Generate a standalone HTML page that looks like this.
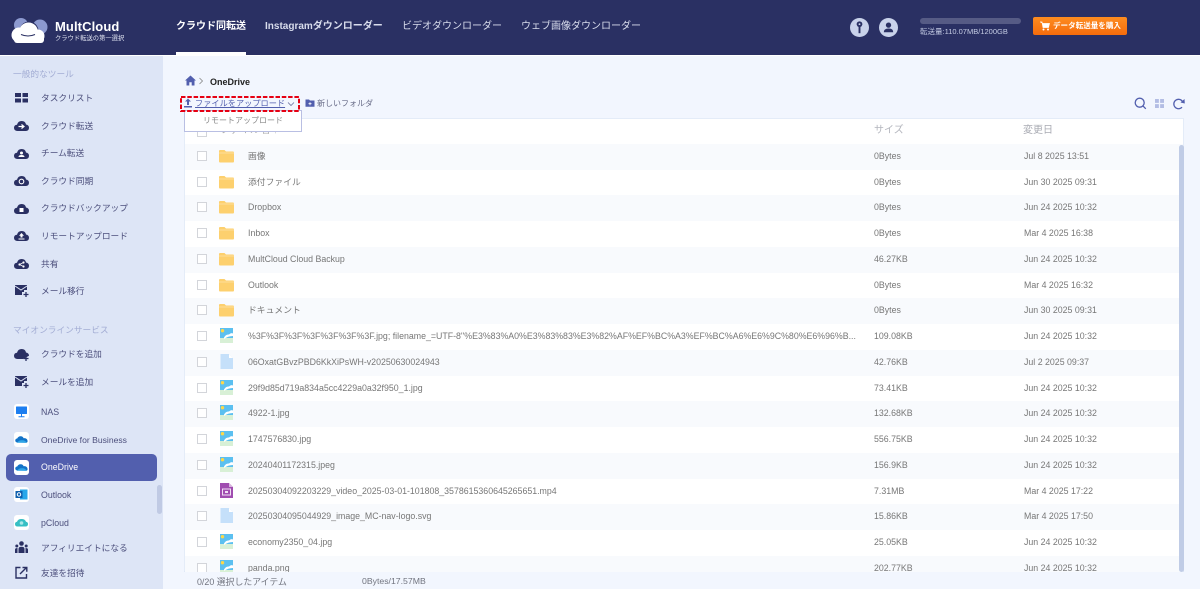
<!DOCTYPE html>
<html lang="ja"><head><meta charset="utf-8"><title>MultCloud</title>
<style>
*{box-sizing:border-box}
html,body{margin:0;padding:0}
body{width:1200px;height:589px;overflow:hidden;position:relative;background:#f2f6fe;font-family:"Liberation Sans","Noto Sans CJK JP",sans-serif;font-size:9px;color:#666}
.a{position:absolute;white-space:nowrap;line-height:14px}
#hd{position:absolute;left:0;top:0;width:1200px;height:55px;background:#2a3063}
#sd{position:absolute;left:0;top:56px;width:163px;height:533px;background:#dde5f6}
.nav{position:absolute;top:20px;color:#d8dcec;font-size:10px;line-height:14px;white-space:nowrap}
.si{position:absolute;left:41px;font-size:8.700px;color:#4c4f7c;line-height:14px;white-space:nowrap}
.sh{position:absolute;left:13px;font-size:8.700px;color:#a3add4;line-height:14px;white-space:nowrap}
.ic{position:absolute;left:14px;width:15px;height:15px}
.tile{position:absolute;left:14px;width:15px;height:15px;background:#fff;border-radius:3px}
.row{position:absolute;left:185px;width:998px;height:25.750px}
.row.s{background:#f8fafd}
.cb{position:absolute;left:12px;top:7px;width:10px;height:10px;border:1px solid #d3d5da;background:#fff}
.nm,.sz,.dt{position:absolute;top:5px;line-height:15px;font-size:8.800px;color:#777;white-space:nowrap}
.nm{left:63px}.sz{left:689px}.dt{left:839px}
.fi{position:absolute;left:34px;top:4px;width:15px;height:16px}
</style></head><body>
<svg width="0" height="0" style="position:absolute">
<symbol id="folder" viewBox="0 0 15 16"><path d="M0 3Q0 2 1 2H5.500L7 3.500H14Q15 3.500 15 4.500V13.500Q15 14.500 14 14.500H1Q0 14.500 0 13.500Z" fill="#fdd06e"/><path d="M0 5H15" stroke="#fff" stroke-width=".5" opacity=".6"/></symbol>
<symbol id="img" viewBox="0 0 15 16"><rect x="1" y="0" width="13" height="15" fill="#5cc0f0"/><rect x="1" y="10" width="13" height="5" fill="#d8f0d6"/><circle cx="3.500" cy="2.700" r="1.700" fill="#fbd84b"/><path d="M5 9.500Q7 6 10 6.500Q12 4.500 14 5.500V8Q9 8 5 11Z" fill="#fff"/></symbol>
<symbol id="doc" viewBox="0 0 15 16"><path d="M1.500 0H10L14 4V15H1.500Z" fill="#c5e0fa"/><path d="M10 0V4H14Z" fill="#fff"/></symbol>
<symbol id="vid" viewBox="0 0 15 16"><path d="M1 0H10L14 4V15H1Z" fill="#a04db0"/><path d="M10 0V4H14Z" fill="#d9b4e0"/><rect x="3.500" y="6" width="8" height="6" fill="none" stroke="#f0dff3" stroke-width="1"/><rect x="6" y="8" width="3" height="2" fill="#f0dff3"/></symbol>
<symbol id="cloud" viewBox="0 0 15 15"><path d="M3.500 13Q0 13 0 9.800Q0 7 3 6.700Q4 3 7.700 3Q11.300 3 12 6.500Q15 7 15 9.800Q15 13 11.800 13Z" fill="#2a3063"/></symbol>
<symbol id="od" viewBox="0 0 15 15"><path d="M3 10.500Q1 10 1.300 8Q1.700 6.500 3.200 6.500Q4.500 3.800 7.300 4.300Q9 4.700 9.700 6.200Q12.800 6 13.500 8.500Q14 10.500 12 10.800Z" fill="#1273c8"/><path d="M3 10.800Q5 8 8 8.300Q11 8 12.800 10.800Z" fill="#30a7e8"/></symbol>
</svg>

<div id="hd">
<svg class="a" style="left:10px;top:16px" width="42" height="29" viewBox="0 0 42 29"><circle cx="11" cy="9" r="7" fill="#8d9ad0"/><circle cx="30" cy="11" r="7.500" fill="#8d9ad0"/><circle cx="19" cy="15" r="9.500" fill="#2a3063"/><circle cx="18.500" cy="16" r="9.500" fill="#fff"/><circle cx="9" cy="19" r="7.500" fill="#fff"/><circle cx="28" cy="20" r="6.500" fill="#fff"/><rect x="4" y="20" width="30" height="7" rx="3" fill="#fff"/><path d="M11 18.500Q18 21.500 25 18.500" stroke="#2a3063" stroke-width="1" fill="none"/></svg>
<div class="a" style="left:55px;top:18.500px;font-size:13px;font-weight:bold;color:#fff;line-height:16px;letter-spacing:.1px">MultCloud</div>
<div class="a" style="left:55px;top:32px;font-size:6.300px;color:#dfe2f0;line-height:13px">クラウド転送の第一選択</div>
<div class="nav" style="left:176px;color:#fff;font-weight:bold">クラウド同転送</div>
<div style="position:absolute;left:176px;top:52px;width:70px;height:3px;background:#fff"></div>
<div class="nav" style="left:265px;font-weight:bold">Instagramダウンローダー</div>
<div class="nav" style="left:402px">ビデオダウンローダー</div>
<div class="nav" style="left:521px">ウェブ画像ダウンローダー</div>
<svg class="a" style="left:850px;top:18px" width="19" height="19" viewBox="0 0 20 20"><circle cx="10" cy="10" r="10" fill="#c9d2ea"/><circle cx="10" cy="6.500" r="3" fill="#2a3063"/><circle cx="10" cy="6.500" r="1" fill="#c9d2ea"/><rect x="9" y="9" width="2" height="7" fill="#2a3063"/></svg>
<svg class="a" style="left:879px;top:18px" width="19" height="19" viewBox="0 0 20 20"><circle cx="10" cy="10" r="10" fill="#c9d2ea"/><circle cx="10" cy="7.500" r="2.800" fill="#2a3063"/><path d="M5 15Q5 11 10 11Q15 11 15 15Z" fill="#2a3063"/></svg>
<div style="position:absolute;left:920px;top:17.500px;width:101px;height:6.500px;border-radius:4px;background:#565b85"></div>
<div class="a" style="left:920px;top:24.500px;font-size:7.500px;color:#c5cce4">転送量:110.07MB/1200GB</div>
<div style="position:absolute;left:1033px;top:17px;width:94px;height:18px;border-radius:2px;background:linear-gradient(#fd8c20,#f66c0c)"></div>
<svg class="a" style="left:1040px;top:21px" width="10" height="10" viewBox="0 0 10 10"><path d="M0 1H2L3 6.500H8.500L9.500 2.500H2.500" fill="#fff" stroke="#fff" stroke-width=".7"/><circle cx="3.500" cy="8.500" r="1" fill="#fff"/><circle cx="8" cy="8.500" r="1" fill="#fff"/></svg>
<div class="a" style="left:1053px;top:19px;font-size:7.550px;font-weight:bold;color:#fff">データ転送量を購入</div>
</div>
<div style="position:absolute;left:0;top:55px;width:1200px;height:1px;background:#fff"></div>

<div id="sd"></div>
<div class="sh" style="top:67px">一般的なツール</div>
<svg class="ic" style="top:90px" viewBox="0 0 15 15"><path d="M1 3H7V7H1ZM8.500 3H14V7H8.500ZM1 8.500H7V12.500H1ZM8.500 8.500H14V12.500H8.500Z" fill="#2a3063"/></svg>
<div class="si" style="top:91px">タスクリスト</div>
<svg class="ic" style="top:118px" viewBox="0 0 15 15"><use href="#cloud"/><path d="M4.500 8.500H9M7.500 6.500L10 8.500L7.500 10.500" fill="none" stroke="#fff" stroke-width="1.200"/></svg><div class="si" style="top:119px">クラウド転送</div>
<svg class="ic" style="top:146px" viewBox="0 0 15 15"><use href="#cloud"/><circle cx="7.500" cy="7" r="1.500" fill="#fff"/><path d="M4.500 11Q4.500 9 7.500 9Q10.500 9 10.500 11Z" fill="#fff"/></svg><div class="si" style="top:146px">チーム転送</div>
<svg class="ic" style="top:173px" viewBox="0 0 15 15"><use href="#cloud"/><circle cx="7.500" cy="8.500" r="2.300" fill="none" stroke="#fff" stroke-width="1.100"/></svg><div class="si" style="top:174px">クラウド同期</div>
<svg class="ic" style="top:201px" viewBox="0 0 15 15"><use href="#cloud"/><path d="M5.500 7H9.500V11H5.500Z" fill="#fff"/></svg><div class="si" style="top:201px">クラウドバックアップ</div>
<svg class="ic" style="top:228px" viewBox="0 0 15 15"><use href="#cloud"/><path d="M7.500 5L10 7.800H8.500V9.500H6.500V7.800H5ZM4.500 10.500H10.500V11.500H4.500Z" fill="#fff"/></svg><div class="si" style="top:229px">リモートアップロード</div>
<svg class="ic" style="top:256px" viewBox="0 0 15 15"><use href="#cloud"/><circle cx="5.500" cy="8.500" r="1.100" fill="#fff"/><circle cx="9.500" cy="6.500" r="1.100" fill="#fff"/><circle cx="9.500" cy="10.500" r="1.100" fill="#fff"/><path d="M5.500 8.500L9.500 6.500M5.500 8.500L9.500 10.500" stroke="#fff" stroke-width=".7"/></svg><div class="si" style="top:257px">共有</div>
<svg class="ic" style="top:283px" viewBox="0 0 15 15"><path d="M1 2H13V7H10V9H8V12H1Z" fill="#2a3063"/><path d="M1 3L7 7L13 3" stroke="#dde5f6" fill="none"/><path d="M9.500 11.500H14.500M12 9V14" stroke="#2a3063" stroke-width="1.300"/></svg>
<div class="si" style="top:284px">メール移行</div>
<div class="sh" style="top:323px">マイオンラインサービス</div>
<svg class="ic" style="top:347px" viewBox="0 0 15 15"><path d="M3.500 12Q0 12 0 8.800Q0 6 3 5.700Q4 2 7.700 2Q11.300 2 12 5.500Q15 6 15 8.800L9 12Z" fill="#2a3063"/><path d="M9.500 11.500H14.500M12 9V14" stroke="#2a3063" stroke-width="1.300"/></svg>
<div class="si" style="top:347px">クラウドを追加</div>
<svg class="ic" style="top:374px" viewBox="0 0 15 15"><path d="M1 2H13V7H10V9H8V12H1Z" fill="#2a3063"/><path d="M1 3L7 7L13 3" stroke="#dde5f6" fill="none"/><path d="M9.500 11.500H14.500M12 9V14" stroke="#2a3063" stroke-width="1.300"/></svg>
<div class="si" style="top:375px">メールを追加</div>
<div class="tile" style="top:404px"></div>
<svg class="ic" style="top:404px" viewBox="0 0 15 15"><rect x="2" y="2.500" width="11" height="7.500" rx=".5" fill="#1d7ef0"/><path d="M7.500 10V12.500M4.500 12.800H10.500" stroke="#1d7ef0"/></svg>
<div class="si" style="top:405px;font-size:8.800px">NAS</div>
<div class="tile" style="top:432px"></div><svg class="ic" style="top:432px"><use href="#od"/></svg>
<div class="si" style="top:433px;font-size:8.600px">OneDrive for Business</div>
<div style="position:absolute;left:6px;top:454px;width:151px;height:27px;border-radius:5px;background:#525fae"></div>
<div class="tile" style="top:460px"></div><svg class="ic" style="top:460px"><use href="#od"/></svg>
<div class="si" style="top:460px;color:#fff;font-size:8.800px">OneDrive</div>
<div class="tile" style="top:487px"></div>
<svg class="ic" style="top:487px" viewBox="0 0 15 15"><rect x="6" y="2.500" width="7.500" height="10" fill="#28a8ea"/><rect x="1.500" y="4" width="7" height="7" fill="#0f5fae"/><circle cx="5" cy="7.500" r="1.700" fill="none" stroke="#fff"/></svg>
<div class="si" style="top:488px;font-size:8.800px">Outlook</div>
<div class="tile" style="top:515px"></div>
<svg class="ic" style="top:515px" viewBox="0 0 15 15"><path d="M3.500 11.500Q1 11.500 1 9Q1 7 3 6.700Q4 4 7.500 4Q11 4 12 6.700Q14 7 14 9Q14 11.500 11.500 11.500Z" fill="#36bfc4"/><circle cx="7.500" cy="8" r="1.800" fill="#a9e6e8"/></svg>
<div class="si" style="top:516px;font-size:8.800px">pCloud</div>
<svg class="ic" style="top:540px" viewBox="0 0 15 15"><circle cx="7.500" cy="3.500" r="2.300" fill="#2a3063"/><circle cx="2.800" cy="6" r="1.500" fill="#2a3063"/><circle cx="12.200" cy="6" r="1.500" fill="#2a3063"/><path d="M4.500 13V9Q4.500 6.800 7.500 6.800Q10.500 6.800 10.500 9V13ZM1 13V9.500Q1 8 3.500 8V13ZM14 13V9.500Q14 8 11.500 8V13Z" fill="#2a3063"/></svg>
<div class="si" style="top:541px">アフィリエイトになる</div>
<svg class="ic" style="top:565px" viewBox="0 0 15 15"><path d="M6.500 2.500H2V13H12.500V9" fill="none" stroke="#2a3063" stroke-width="1.400"/><path d="M6 9L12 3M8.500 2.500H12.800V6.800" fill="none" stroke="#2a3063" stroke-width="1.400"/></svg>
<div class="si" style="top:566px">友達を招待</div>
<div style="position:absolute;left:157px;top:485px;width:5px;height:29px;border-radius:3px;background:#c0cae4"></div>

<svg class="a" style="left:185px;top:75px" width="11" height="11" viewBox="0 0 11 11"><path d="M5.500 .5L11 5.500H9.500V10.500H6.700V7.300H4.300V10.500H1.500V5.500H0Z" fill="#525fae"/></svg>
<svg class="a" style="left:198px;top:77px" width="6" height="8" viewBox="0 0 6 8"><path d="M1.500 1L4.500 4L1.500 7" fill="none" stroke="#888" stroke-width=".8"/></svg>
<div class="a" style="left:210px;top:75px;font-size:9px;font-weight:bold;color:#222">OneDrive</div>

<div style="position:absolute;left:184px;top:118px;width:1000px;height:454px;background:#fff;border:1px solid #e4ecf8;border-bottom:1px solid #dbe5f5"></div>
<div class="a" style="left:220px;top:124px;font-size:10px;color:#aaa">ファイル名 ↑</div>
<div style="position:absolute;left:197px;top:127px;width:10px;height:10px;border:1px solid #d3d5da;background:#fff"></div>
<div class="a" style="left:874px;top:124px;font-size:10px;color:#b3b5bd">サイズ</div>
<div class="a" style="left:1023px;top:124px;font-size:10px;color:#a9abb3">変更日</div>

<div class="row s" style="top:143.800px"><span class="cb"></span><svg class="fi"><use href="#folder"/></svg><span class="nm">画像</span><span class="sz">0Bytes</span><span class="dt">Jul 8 2025 13:51</span></div>
<div class="row" style="top:169.550px"><span class="cb"></span><svg class="fi"><use href="#folder"/></svg><span class="nm">添付ファイル</span><span class="sz">0Bytes</span><span class="dt">Jun 30 2025 09:31</span></div>
<div class="row s" style="top:195.300px"><span class="cb"></span><svg class="fi"><use href="#folder"/></svg><span class="nm">Dropbox</span><span class="sz">0Bytes</span><span class="dt">Jun 24 2025 10:32</span></div>
<div class="row" style="top:221.050px"><span class="cb"></span><svg class="fi"><use href="#folder"/></svg><span class="nm">Inbox</span><span class="sz">0Bytes</span><span class="dt">Mar 4 2025 16:38</span></div>
<div class="row s" style="top:246.800px"><span class="cb"></span><svg class="fi"><use href="#folder"/></svg><span class="nm">MultCloud Cloud Backup</span><span class="sz">46.27KB</span><span class="dt">Jun 24 2025 10:32</span></div>
<div class="row" style="top:272.550px"><span class="cb"></span><svg class="fi"><use href="#folder"/></svg><span class="nm">Outlook</span><span class="sz">0Bytes</span><span class="dt">Mar 4 2025 16:32</span></div>
<div class="row s" style="top:298.300px"><span class="cb"></span><svg class="fi"><use href="#folder"/></svg><span class="nm">ドキュメント</span><span class="sz">0Bytes</span><span class="dt">Jun 30 2025 09:31</span></div>
<div class="row" style="top:324.050px"><span class="cb"></span><svg class="fi"><use href="#img"/></svg><span class="nm">%3F%3F%3F%3F%3F%3F%3F.jpg; filename_=UTF-8''%E3%83%A0%E3%83%83%E3%82%AF%EF%BC%A3%EF%BC%A6%E6%9C%80%E6%96%B...</span><span class="sz">109.08KB</span><span class="dt">Jun 24 2025 10:32</span></div>
<div class="row s" style="top:349.800px"><span class="cb"></span><svg class="fi"><use href="#doc"/></svg><span class="nm">06OxatGBvzPBD6KkXiPsWH-v20250630024943</span><span class="sz">42.76KB</span><span class="dt">Jul 2 2025 09:37</span></div>
<div class="row" style="top:375.550px"><span class="cb"></span><svg class="fi"><use href="#img"/></svg><span class="nm">29f9d85d719a834a5cc4229a0a32f950_1.jpg</span><span class="sz">73.41KB</span><span class="dt">Jun 24 2025 10:32</span></div>
<div class="row s" style="top:401.300px"><span class="cb"></span><svg class="fi"><use href="#img"/></svg><span class="nm">4922-1.jpg</span><span class="sz">132.68KB</span><span class="dt">Jun 24 2025 10:32</span></div>
<div class="row" style="top:427.050px"><span class="cb"></span><svg class="fi"><use href="#img"/></svg><span class="nm">1747576830.jpg</span><span class="sz">556.75KB</span><span class="dt">Jun 24 2025 10:32</span></div>
<div class="row s" style="top:452.800px"><span class="cb"></span><svg class="fi"><use href="#img"/></svg><span class="nm">20240401172315.jpeg</span><span class="sz">156.9KB</span><span class="dt">Jun 24 2025 10:32</span></div>
<div class="row" style="top:478.550px"><span class="cb"></span><svg class="fi"><use href="#vid"/></svg><span class="nm">20250304092203229_video_2025-03-01-101808_3578615360645265651.mp4</span><span class="sz">7.31MB</span><span class="dt">Mar 4 2025 17:22</span></div>
<div class="row s" style="top:504.300px"><span class="cb"></span><svg class="fi"><use href="#doc"/></svg><span class="nm">20250304095044929_image_MC-nav-logo.svg</span><span class="sz">15.86KB</span><span class="dt">Mar 4 2025 17:50</span></div>
<div class="row" style="top:530.050px"><span class="cb"></span><svg class="fi"><use href="#img"/></svg><span class="nm">economy2350_04.jpg</span><span class="sz">25.05KB</span><span class="dt">Jun 24 2025 10:32</span></div>
<div class="row s" style="top:555.800px;height:16px;overflow:hidden"><span class="cb"></span><svg class="fi"><use href="#img"/></svg><span class="nm">panda.png</span><span class="sz">202.77KB</span><span class="dt">Jun 24 2025 10:32</span></div>
<div style="position:absolute;left:1179px;top:145px;width:5px;height:427px;border-radius:3px;background:#c0cce6"></div>

<div style="position:absolute;left:184px;top:110px;width:118px;height:22px;background:#fff;border:1px solid #b9bfe3"></div>
<div class="a" style="left:203px;top:113.500px;font-size:8px;color:#8a8a8a">リモートアップロード</div>
<svg class="a" style="left:179px;top:95px" width="123" height="18" viewBox="0 0 123 18"><rect x="2" y="2" width="118" height="14" fill="none" stroke="#e60012" stroke-width="2" stroke-dasharray="4.500 1.800"/></svg>
<svg class="a" style="left:183px;top:98px" width="10" height="10" viewBox="0 0 10 10"><path d="M5 .5L8 3.500H6V7H4V3.500H2ZM1 8H9V9.500H1Z" fill="#525fae"/></svg>
<div class="a" style="left:195px;top:96.500px;font-size:8.200px;color:#525fae;text-decoration:underline">ファイルをアップロード</div>
<svg class="a" style="left:287px;top:101px" width="8" height="7" viewBox="0 0 8 7"><path d="M1 1.500L4 4.500L7 1.500" fill="none" stroke="#555a90" stroke-width=".7"/></svg>
<svg class="a" style="left:305px;top:98px" width="10" height="10" viewBox="0 0 10 10"><path d="M.5 1.500H4L5 2.500H9.500V8.800H.5Z" fill="#525fae"/><path d="M3.500 5.700H6.500M5 4.200V7.200" stroke="#fff" stroke-width=".8"/></svg>
<div class="a" style="left:317px;top:96.500px;font-size:8px;color:#666a86">新しいフォルダ</div>
<svg class="a" style="left:1133px;top:96px" width="14" height="14" viewBox="0 0 14 14"><circle cx="6.700" cy="6.700" r="4.500" fill="none" stroke="#525fae" stroke-width="1.300"/><path d="M10 10L12.800 12.800" stroke="#525fae" stroke-width="1.300"/></svg>
<svg class="a" style="left:1155px;top:99px" width="9" height="9" viewBox="0 0 10 10"><path d="M0 0H4.300V4.300H0ZM5.700 0H10V4.300H5.700ZM0 5.700H4.300V10H0ZM5.700 5.700H10V10H5.700Z" fill="#b3bde4"/></svg>
<svg class="a" style="left:1172px;top:96px" width="14" height="14" viewBox="0 0 14 14"><path d="M10 11.200A4.700 4.700 0 1 1 10.500 5.500" fill="none" stroke="#525fae" stroke-width="1.300"/><path d="M8.500 6.500L12.800 7.500L12.500 3Z" fill="#525fae"/></svg>

<div class="a" style="left:197px;top:575px;font-size:8.900px;color:#71747f">0/20 選択したアイテム</div>
<div class="a" style="left:362px;top:574px;font-size:8.700px;color:#71747f">0Bytes/17.57MB</div>
</body></html>
